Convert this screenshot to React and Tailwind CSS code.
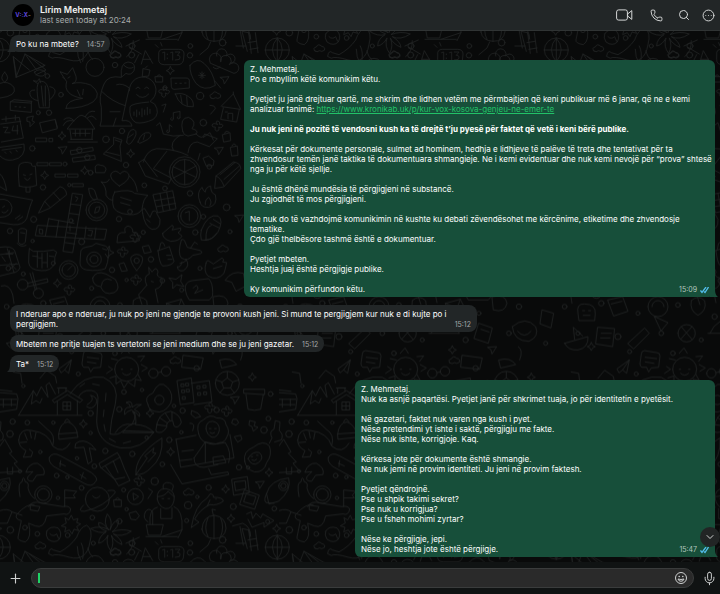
import clsx from "clsx";
import { ChevronDown, CircleEllipsis, Mic, Phone, Plus, Search } from "lucide-react";

const TILE_W = 837;
const TILE_H = 1492;

// [x, y, r] of the little bubbles between the doodles
const dots = [
  [345, 45, 8], [395, 15, 9], [570, 16, 8], [285, 52, 27], [183, 134, 7], [142, 78, 7], [600, 138, 11],
  [495, 113, 6], [115, 188, 6], [147, 188, 8], [318, 268, 10], [366, 243, 8], [610, 218, 10], [97, 295, 8],
  [195, 342, 6], [378, 345, 8], [129, 412, 8], [208, 405, 5], [272, 368, 7], [433, 406, 7], [495, 415, 7],
  [570, 430, 8], [628, 350, 7], [680, 472, 10], [610, 500, 7], [101, 508, 9], [213, 512, 6], [357, 507, 8],
  [430, 547, 6], [30, 543, 8], [245, 575, 9], [98, 573, 5], [390, 485, 7], [453, 628, 8], [586, 547, 8],
  [690, 545, 6], [70, 672, 6], [336, 660, 8], [487, 692, 7], [600, 655, 6], [25, 655, 7], [380, 690, 5],
  [160, 640, 6], [275, 715, 6], [545, 720, 6], [745, 60, 9], [790, 130, 8], [760, 210, 7], [800, 330, 9],
  [765, 430, 7], [745, 590, 8], [810, 640, 6], [20, 770, 7], [130, 760, 8], [240, 790, 6], [360, 765, 7],
  [470, 800, 8], [600, 790, 6], [720, 770, 8], [60, 850, 6], [180, 860, 9], [310, 850, 7], [430, 870, 6],
  [560, 870, 8], [690, 850, 7], [800, 880, 6], [215, 905, 6], [345, 910, 7], [590, 955, 8], [235, 972, 6],
  [272, 1090, 8], [358, 1078, 8], [372, 1026, 7], [426, 1020, 5], [548, 1082, 8], [650, 1080, 8],
  [38, 1115, 8], [30, 1152, 10], [82, 1118, 7], [160, 1118, 5], [272, 1149, 5], [544, 1147, 5], [508, 1170, 8],
  [440, 1163, 5], [397, 1212, 8], [316, 1203, 8], [283, 1249, 7], [231, 1225, 5], [487, 1243, 7], [121, 1206, 5],
  [792, 1140, 10], [805, 1106, 7], [170, 1277, 7], [60, 1264, 5], [202, 1282, 5], [245, 1314, 7],
  [464, 1294, 11], [371, 1320, 6], [626, 1313, 8], [717, 1252, 8], [744, 1253, 5], [592, 1341, 5], [564, 1366, 11],
  [174, 1344, 5], [358, 1414, 8], [277, 1403, 7], [700, 1370, 9], [31, 1440, 10], [75, 1433, 7], [112, 1452, 7],
  [203, 1456, 7], [280, 1480, 6], [668, 1470, 10], [396, 1480, 9], [571, 1480, 7], [823, 1376, 7], [803, 1415, 6],
  [380, 1378, 5], [560, 1412, 6], [812, 1032, 7], [522, 1068, 5], [70, 1008, 5],
];

const sparkles = [
  [186, 258], [134, 376], [254, 362], [392, 311], [511, 62], [172, 700], [450, 1090], [250, 1122],
  [512, 1206], [807, 1268], [677, 1318], [757, 982], [693, 1406], [830, 1436], [520, 900], [100, 890],
];

const flowers = [
  [652, 228], [368, 606], [408, 690], [418, 1293], [680, 1084], [630, 1074], [208, 720], [492, 126], [406, 562],
];

const triangles = [
  [188, 300], [657, 302], [674, 90], [718, 505], [705, 1050], [780, 1304], [640, 900],
];

const clouds = [
  [345, 12], [668, 595], [120, 1486], [346, 1506], [565, 1325], [525, 930], [645, 135],
];

const doodlePaths = [
  // party hat and pyramid
  "M40 22L48 82L135 46L75 12L48 82M75 12L108 58L135 46M104 66q14-14 32 0q0 14-16 12t-16-12z",
  // candle and cactus
  "M0 100q24-10 42 12q10 26-42 32M14 66q18 20 0 30q-18-10 0-30",
  "M118 172q-16-80 6-78q28-2 24 78zM112 100l-12-8l12 2l6-8l4 12M104 120q-18 0-14 14q4 14 24 18M150 110q20 4 14 20q-6 14-16 20M124 108l6 60M136 108l0 60",
  // fox
  "M198 175q0-25 50-30q-60-10-48-50l-20-30l22 8l16-20l10 26q4 18-12 22q24-8 56 4q36 26 8 50q-30 20-82 20M188 82l6 4M204 84l6-4M232 120l8 18M250 118l-2 16",
  // cassette
  "M32 155l62 4l0 28l-62-6zM32 155l10-6l54 5l-2 5M45 170h4M58 171h4M72 172h4",
  // hugging pair
  "M364 80q-4-42 20-44q26 2 18 26q-10 16-24 8l-14 12q-40-8-52 20q-18 40-8 70l0 40l-4 16h96q-4-20-30-16l14-64l8-34q-20-16-38-10M306 125q30 30 70 42M330 185h30M340 228l8-24M372 46q14 14 28 6",
  "M388 122a40 40 0 1 1 62 32l14 8q18 28-4 46q-30 14-52 10q-22-12-18-48q6-10 56-14M408 116q6-10 12 0M434 116q6-10 12 0M410 134q18 18 36-2M402 186v10M410 180v20M418 186v8M426 176v24M434 180v14M442 172v22M450 178v12",
  // chat bubble, calendar, flash
  "M514 84h44q12 0 10 12v18l-46 4q-8 0-8-8zM526 100h4M540 100h4M554 99h4",
  "M6 208l52-6l12 62l-66 12M2 222l60-8M18 200v14M46 196v14M10 232h14l-10 16h16M40 228l-4 14h18M52 226v26",
  "M82 202l18-4l-4 14l8 4l-14 14l0-14l-8-2z",
  "M120 218l46-10l6 28l-44 12zM166 212l6 20",
  // beach hut
  "M202 236q34-44 44-40q18 4 38 40zM210 240l4 28M278 238l-2 28M212 268h66M192 208q16-12 30 4M190 226q8-18 28-14M256 200q10-20 28-16M262 204q14-14 26 4M218 250h52M226 240v18M240 240v18M256 240v18M204 276h88",
  // surfboard
  "M570 46q22-26 42-6q28 24 34 66q-34 20-58-6q-20-28-18-54zM606 66v20M596 76h20M600 69l12 14M612 69l-12 14M644 92l18 22",
  // fruits
  "M630 36a18 18 0 1 1 32 0a16 16 0 1 1 26 8a16 16 0 1 1 14 26l-70-30zM640 52q10 10 20-2",
  // snail shell and notes
  "M526 132q22-6 40 8q16 10 14 30q-40 4-54-38zM542 136l4 24M560 140l2 26M486 166l12-4l-8 24M630 166q16 0 16 10l-14 16",
  "M520 206v-18l20-4v18M520 206a4 4 0 1 1-6-3M540 202a4 4 0 1 1-6-3M508 244v-20l8 6M508 244a4 4 0 1 1-5-4",
  // bird house
  "M664 168l36-36l22 46l-56-8M670 174l-8 34l48 8l8-38M684 206v-16h14v20M700 132v-6M676 186h6",
  // padlock and bottle
  "M668 254l22-6l2 24l-20 4zM674 250q2-10 12-4M692 292l20-4l2 28l-18 2zM696 288q4-12 12-2M466 80h22v16h-20zM470 80q8-12 14 0M430 56l20 4l-4 18l-18 2zM436 54l6-6",
  // watermelon, popsicle
  "M0 292l72-10q8 40-34 48q-22 4-38-12M6 300l58-8M14 306l4 4M30 304l4 5M48 300l4 5",
  "M58 408q-6-50 0-64q14-12 36-4q0 12 12 8l4 58q-28 10-52 2zM78 412v14h12v-14M70 374l6 2M90 374l6-2M74 384q8 14 16 0M0 372q14 12 20 50l-20-12",
  // dashes
  "M108 264h32v11h-32zM148 265h10v10h-10zM112 338h32v9h-32zM150 338h34v9h-34zM166 372h30v9h-30zM204 372h30v9h-30zM218 401h32v9h-32z",
  // rulers
  "M212 302l66-10l2 10l-66 12zM218 324l66-8l2 12l-66 8zM230 300a8 8 0 1 0 16 0a8 8 0 1 0-16 0M254 322a8 8 0 1 0 16 0a8 8 0 1 0-16 0",
  // flask and slippers
  "M342 262l24 8l-6 18l4 46l-54-22l30-28zM346 270l16 6M318 306l40 10M380 276q4-40 22-38q16 10-8 40q-10 10-14-2zM386 262l14-10M414 276q10-32 34-28q16 12-20 28q-10 8-14 0zM430 268l4-14",
  // stretching woman
  "M548 244q-10-42 18-42q26 12 10 34q22 6 12 16l-24 6q-14-2-16-14M470 226l10-8l10 34q30 10 60 4M588 252q20 20 26 0l38 14l-24 24l-36-14q-24 0-28 32M540 256q-34 20-20 46M610 262l20-14l10 22",
  // wheelchair
  "M430 336q10-36 40-40q54 0 94 20M416 338l20 40l70 24l8-18l-54-28l40-52M416 338l16-10l40 52M508 366a46 46 0 1 1 92 0a46 46 0 1 1-92 0M516 366a38 38 0 1 1 76 0a38 38 0 1 1-76 0M554 328v76M520 350l68 32M520 384l68-36M600 310l-6 20",
  // pencil and leaf
  "M644 414l4-36l52-42q22 2 22 20l-50 54zM648 378q14 4 24 30M660 374l44-36M672 388l46-40M610 324l16-6l16 14l-2 14l-20 2z",
  // heart and speech bubbles
  "M358 408q-34-24-24-38q14-14 26 2q14-16 26 0q8 16-28 36zM304 396q18 6 24-8M304 396q16 14 14 40q10 16 20 14M388 378q20 14 24 46M344 426q50-10 60 4l40 6q-14 8-18 42q-10 18-38 16q-50-4-50-34q-2-22 6-34zM362 442l32 10M362 458l28 8M286 350q4-10 16-4q14 0 16 12l-4 10h-26z",
  // gift cube
  "M460 434l58-12l10 54l-54 12zM464 452l58-10M470 470l56-10M480 430l10 54M500 426l10 54",
  // flame, corn
  "M600 456q-12-28 6-44q4 12 10 14q0-14 16-18q0 22 14 26q8 32-20 38q-22 2-26-16zM616 464q-2-14 10-22q12 14 4 24",
  "M604 540q20-50 50-42q18 12 0 48q-20 30-50 24q-4-16 0-30zM618 570q-2-40 16-44M650 550q-12 20-34 20M630 520l28 14M640 508l22 14",
  // clock
  "M534 498a34 34 0 1 1 68 0a34 34 0 1 1-68 0M542 498a26 26 0 1 1 52 0a26 26 0 1 1-52 0M556 488l12-4l0 28",
  // tube, compass, envelope face
  "M116 488l18-34l46-44q18 4 20 24l-50 40zM134 454l16 18M160 428l20 22M266 416q12-4 18 6l8 24l-10 4q-14-8-16-34M258 480a32 32 0 1 1 64 0a32 32 0 1 1-64 0M266 480a24 24 0 1 1 48 0a24 24 0 1 1-48 0M284 488l4-16l12-2l-4 14z",
  "M0 432l98 18q-6 10-18 56q-10 20-40 18l-40-6M0 448q30-4 36 24q0 30-36 30M8 472l6-4M6 486q10 8 18-6M46 506l14-10M54 510l14-10",
  // crossword
  "M218 430l30 4l-30 174l-28-4zM106 556l6-30l208 12l-6 30zM146 506l76 14M146 506l-10 52M176 512l-8 50M212 462l30 4M208 490l30 4M202 548l28 4M196 578l28 4M258 530l-4 34M288 534l-4 32M118 538v12l10 2l0-12zM266 540l12 2l-4 16l-10-2M226 440l8 4l-6 10M210 528v14",
  // hands
  "M428 490q-4-16 6-14l16 26l8-18q12-4 12 6l10 18q2 32-24 30q-22-8-28-48M440 508l10 8M488 550l28-24q8 2 0 14l26-6q4 8-8 14l12 10q-8 16-34 16q-26-8-24-24zM544 570q8-6 12 8l6 14l40 10q8 8-4 10l-20 4q-14 20-34 8q-12-14 0-54M572 594l12-18l8 6",
  "M618 640q2-12 10-6l12 8l26-18q10 4 2 12l12 2q-4 20-8 32q-20 24-48 8q-14-14-6-38M640 656l26-8",
  // toothbrush, bears, spoon
  "M56 540q10-10 24 0l-4 36q-10 14-20 2zM62 548l12 2M52 580q10 14 26 6",
  "M88 596l12 8q30 2 60-4l10 6q-8 14-6 34q-10 24-40 22q-36-2-38-24q0-26 2-42M98 618l16 2M112 606v46M126 610v44M142 608v44M116 624h10M128 638h12M148 618l14 2",
  "M178 660a28 28 0 1 1 56 0a28 28 0 1 1-56 0M186 660a20 20 0 1 1 40 0a20 20 0 1 1-40 0M204 660l12-12",
  // calculator
  "M0 592q36-6 44 10l16 50q-4 14-20 16l-40 10M0 614l42-6M0 646l54-4M22 596l20 72M18 612h20M28 602v20M30 640l18 18M48 640l-18 18M6 620l10 14",
  // camera
  "M242 606q0-10 14-14l20-4l12-8l28 8q12 6 10 24q-2 28-10 44q-20 8-56 4q-20-4-20-20zM260 628a22 22 0 1 1 44 0a22 22 0 1 1-44 0M270 628a12 12 0 1 1 24 0a12 12 0 1 1-24 0M308 596l12 4l8-12l2 14l12 6l-12 6l-6 10l-8-12",
  // gamepad, marker, baby bottle
  "M352 568q-2-24 24-20q-6-16 8-20q16 4 14 18q20 4 20 26l-66 6zM428 590l18-4l8 20l-20 4zM410 662q-24-30-16-42q16-14 32 0q8 16-16 42M402 632a8 8 0 1 1 16 0a8 8 0 1 1-16 0M358 642l14-4l10 24l-16 2z",
  "M474 602l34-12l14 44q-6 14-34 14q-10-8-14-46zM478 598l4-18q8-8 12 8M500 616h12M504 628h12M540 640q20-4 18-12q14 20-8 34q-16 4-18-12q10 4 14-14",
  // scissors, eggs
  "M52 704a16 16 0 1 1 32 0a16 16 0 1 1-32 0M100 730a15 15 0 1 1 30 0a15 15 0 1 1-30 0M82 700l60-14l2 10l-60 14M90 670l16 50M98 668l12 50M4 708q24-8 34 26l4 26",
  "M278 684q10-24 40-12l28 16q18 30-4 40q-30 10-40-18q-24-2-24-26zM304 708q4-30 30-18M508 684l20 4l18-14l-4 20l10 16l-22-6l-12 12l0-18z",
  "M440 706q-12-28 8-34l-2-20l10 14q14-20 18 0q-8 14 12 18q4 28-20 34l8 40M440 706l-24 28l10 30M454 694l6 2M556 720q-4-24 20-28l50-6q12 12 12 40q4 12-10 24h-60q-10-14-12-30M580 714q12-16 14 2l-10 14l24-10M676 690q20-30 54-20q6 20 4 40l-26 14l-12-26z",
  // robot and ring row
  "M60 790q-6-30 20-28q34 0 32 30l-2 20h-46zM74 782h6M92 782h6M76 796h20M150 750l44-10l16 44l-42 14zM160 762l32-8M270 770a30 30 0 1 1 60 0a30 30 0 1 1-60 0M282 770a18 18 0 1 1 36 0M400 752q20-20 40 0q8 30-20 44q-26-14-20-44M500 760l44-12l20 40l-50 16zM500 760l34 16l10-28M640 740q40-10 44 20q-6 30-40 20z",
  // boat and guitar row
  "M20 880l70-20q2 34-30 40q-30 2-40-20zM50 868l-4-36l28 26M120 832l50 4l-6 54l-50-8zM130 850h30M128 864h28M210 880l50-46l14 16l-46 46zM290 800l40 18l-20 24zM360 850a26 26 0 1 1 52 0a26 26 0 1 1-52 0M370 830l32 38M402 830l-34 38M450 850h90M456 850q20-50 80-40l4 40M600 820l40 14l-12 46l-42-14zM606 838l24 8M700 830q40-34 70 0q12 30-20 44q-46 0-50-44M716 844q20 24 40 0M790 780l34 10l-8 44l-32-12z",
  // note, plane, sun
  "M250 912q0-10 10-10l36 6q10 0 10 10l-4 34l-22 2l-8 12l-6-14h-14q-6-2-6-10zM262 922l34 4M262 936l26 4",
  "M178 956l36-26l-8 40l-12-10l-10 8zM214 930l-20 30",
  "M344 958a36 36 0 1 1 72 0a36 36 0 1 1-72 0M364 958h4M392 958h4M368 970q12 12 24 0M334 926l18 4M364 910l14-16l10 16M414 920l20-2l-12 16M424 944l18 10l-16 10M326 950l12 8l-18 12M330 984l18-6l0 24l14-10l10 22l12-18l20 14l2-22l18 4l-10-18",
  // controllers, taco
  "M446 970a14 14 0 1 1 28 0a14 14 0 1 1-28 0M484 964a14 14 0 1 1 28 0a14 14 0 1 1-28 0M474 968l10-2M120 985l20-24l26 18l4 20M40 966l22 4l4 30M550 916l60 8l-8 34l-56-6zM660 930q34-10 50 14l-44 10zM718 890q16 10 4 40",
  // cabin on the mountain
  "M56 1096l44-74l10 16l14-28l20 32l-6-36l10-8l18 34M100 1022l-6 40l14-10l12 8l6-14M56 1096h190M158 1050l44-28l46 28l-8 8l-38-24l-38 24zM172 1054v40M232 1052v42M190 1056h22v24h-22zM201 1056v24M190 1068h22M176 1030v-16h22v10M172 1014h28",
  "M0 1028l50 4l4 14l-4 32l-50 8M0 1048h50M0 1064h48M10 1048v24M34 1048v20M0 1020l36 4",
  // road
  "M210 1032q40-60 100-50q50 22 36 80q-14 50-16 90q24 6 40-10l92 4q-36 54-100 48q-70-14-72-80l4-72q-2-24-34-20q-20 6-24 20M240 1010l14-10M278 1002l20 4M318 1030l-2 24M312 1080l-2 20M312 1124l4 20M328 1166l18 10M370 1180l22-6M262 1064q24-14 10-28q24 6 16 26q-12 20-28 8",
  // palm island
  "M346 1148q20-32 50-24q20-36-2-44q-14 4-20 14q-4-24 18-22q-4-14-14-14q20-10 18 14q12-12 28-8q-20 10-20 16q20 8 14 20q-10-16-20-14q14 18 8 38q34 0 56 24h-94q16-26 40-28",
  // fried egg
  "M444 1064q-14-24 14-34q20-44 44-18q20 20 10 48q-20 34-48 24q-18-4-20-20M464 1050a14 14 0 1 1 28 0a14 14 0 1 1-28 0",
  // buildings
  "M532 992l42-8l8 74l-40 6zM574 1000l54-8l8 64l-54 8M544 1002h8v8h-8zM558 1000h8v8h-8zM546 1020h8v8h-8zM560 1018h8v8h-8zM548 1040h8v8h-8zM592 1008h8v8h-8zM610 1006h8v8h-8zM594 1028h8v8h-8zM612 1026h8v8h-8z",
  // football and pot
  "M646 1000a36 36 0 1 1 72 0a36 36 0 1 1-72 0M666 996l16-12l16 12l-6 18h-20zM682 984v-18M698 996l18-6M692 1014l12 16M672 1014l-12 14M666 996l-18-6M732 1018l62 0l0 16l-62-4zM738 1034l6 44q20 6 38 0l8-44",
  // croissant
  "M468 1138q4-50 44-54q30 10 32 34q-10 20-22 10l-4-16q-20 0-18 20q-14 22-30 14zM480 1104l20 14M496 1090l14 22M516 1086l0 24M470 1124l28 4",
  // beanie and shrimp
  "M176 1152q4-34 28-36q26 10 28 38l2 8l-56 6zM176 1152l56-4M194 1116q6-18 16 0M56 1170q4-38 40-28q50 6 62 46q10-34-16-50l-26-24M56 1170q0 22 22 32l-8 20l24-2l4-14l-10-8M74 1150l8 20M90 1144l4 20M108 1148l-4 20M60 1178l20-2M160 1190q30 24 50-10",
  // tree, hammer, skateboard
  "M0 1188l14-20l22 38l-8 4l24 26l-10 4l20 24l-62 4M22 1254v18h16v-20M228 1180q20-16 46 4l14 16l-20-6l8 40l-12 8l-12-50l-26 2zM148 1222q10-18 34-4l92 50q24 18 12 28q-10 18-34 4l-90-50q-18-14-14-28M178 1240l18 8M240 1274l18 12M182 1232l-2 18M250 1268l-6 18",
  // drum, leaf, mushroom
  "M298 1240l54-32l8 14l-56 32zM304 1254l40 34l30-6M360 1222l14 36l16 34l-34 16l-16-26M316 1248l24 36M340 1234l14 34M408 1274q-6-56 78-110q4 60-34 90q-20 22-44 20M408 1274l34-50l-8-6l28-24l-4 14l10 2l-24 26M78 1266q10-28 34-26q26 14 20 34l-22 2l-12 18q-20 0-14-14l14-14z",
  // woman at the laptop
  "M596 1152q-10-34 14-42q20-20 40-6q26-2 28 20q14 20 2 38q-6 16-20 16q-20 10-40 0q-18-4-24-26M618 1136q0-22 20-22q22 4 20 28q-6 22-22 20q-16-8-18-26M628 1136h5M644 1136h5M630 1148q6 6 14 0M528 1168l60-12M528 1168l14 84l160-28l-12-70M546 1204l34-4M540 1232l36-4M582 1224l34-48l30 6l30-4q20 30 10 60M616 1176l0 60M582 1224q0 30 30 28l42-8M640 1222l30-4l8 20l-36 6zM512 1244l34 58l140-28l-2-8l-50 8l-8-18",
  // avocado and squash
  "M734 1234q-6-30 26-42q30-24 48-4q10 26-8 50q-8 30-36 28q-26-8-30-32zM744 1226q14-24 34-18q16 14-2 30q-20 14-32-12M754 1220h4M770 1216h4M756 1230q8 6 14-2M808 1180l8-16q-10-20 6-26l4-26l14 4l-2 26q14 12 6 28l-20 6",
  // gems
  "M750 1112l16 4l-4 12l12 4l-14 12l-4-14l-8-4zM700 1108l10 0l6 10l-8 8l-12-6zM704 1160l18-4l4 12l-12 8zM570 1120q18-2 8 22M576 1082l18 8l8 10l-16 4l-12-10z",
  // astronaut
  "M60 1340q-8-44 6-44q4-24 10 0q12 0 8 18q6 24 20 32M104 1334a26 26 0 1 1 52 0a26 26 0 1 1-52 0M112 1334a18 18 0 1 1 36 0a18 18 0 1 1-36 0M86 1370q10-20 40-10l62 10q20-4 24 8q-4 20-20 14l-52 6q-8 40-34 30l-20-8q10 44-10 56q-24-4-22-14l10-50q-20-4-14-18q30-34 52-30M92 1366l28 4l-6 14l-22-4zM194 1370l0-50l36 4l-10 12l6 8l-30 0M0 1382q24-8 36 4l-14 34h-22M36 1386l30 10",
  // rocket
  "M800 1330q10-40 66-46q10 36-30 70l-28 8zM836 1308a14 14 0 1 1 28 0a14 14 0 1 1-28 0M842 1308a8 8 0 1 1 16 0a8 8 0 1 1-16 0M800 1330q-10 20-2 28l24 2",
  // planet, play, photo frames
  "M256 1348a36 36 0 1 1 72 0a36 36 0 1 1-72 0M250 1366q-20 20 4 18q60-14 90-54q8-12-20-8M278 1338q10 14 22 0M382 1340a24 24 0 1 1 48 0a24 24 0 1 1-48 0M400 1330l16 10l-14 10zM342 1350h22v20h-20zM346 1350q6-14 14 0M388 1390l20-6l10 14l-10 12l-14-2zM446 1316l12 8l-14 22",
  "M696 1288l46-8l6 48l-46 8zM704 1296l32-4l2 24l-30 6zM734 1320l44 16l-14 42l-44-14zM740 1332l28 8l-8 24l-28-8z",
  // gardener
  "M472 1348q-4-32 26-32q30 6 24 36q-6 26-26 24q-20-6-24-28M490 1316q-4-16 10-18q20 0 20 12l-4 12M474 1340q20 0 30-16l18 16M486 1346h5M504 1346h5M472 1372q-26 4-22 50M522 1370q28 10 24 70l-60 20M482 1376v30h34v-32M440 1424h50l-8 32h-36zM436 1386q10-16 22 0v38M436 1386q-10 20 8 30M438 1460h94M546 1440l-12 24",
  // fish and pumpkin
  "M574 1432q10-66 48-88l8-12q12 0 10 10q30 0 30 12q-20 14-40 10q-30 14-46 44l12 8zM630 1350l-8 18M648 1346v2",
  "M606 1438q2-40 38-42q34 6 34 40q-4 30-36 30q-32-2-36-28zM624 1404q-14 30 0 56M642 1396v70M662 1404q12 28 0 56M640 1396l-4-18l10 2M600 1506l24-20l8-18",
  // bamboo
  "M740 1392l14-6l4 20l10-16l14 14l6-12l34 20l-30 20v-14l-36 14l-12-24M698 1428l30-8q24 10 24 40l-6-20l-20-4l16 60M708 1480l30 0M746 1440l8 62M766 1440l8 60M744 1470l24-4M750 1490l24-4M720 1430l10 56",
  // globe
  "M796 1492a36 36 0 1 1 72 0a36 36 0 1 1-72 0M832 1456v72M796 1492h72M832 1456q-30 34 0 72M832 1456q30 34 0 72",
  // whale
  "M146 1510q4-20 14-10l20 6q30-16 50-44q10-30 30-36q20 12 10 50q-10 60-62 46q-40-12-50-6zM232 1490q0 24 10 40M244 1480q10 20 4 46M264 1494q4 20 14 26",
  // poinsettia
  "M326 1440q-18-20-4-48q18 20 8 48q10-30 26-28q0 20-20 34q30-12 58-2q-30 20-54 8q24 14 26 32q-24-10-32-28q10 24-2 46q-16-20-8-46q-10 20-28 24q0-20 22-34q-22 6-46-10q26-10 52 2M326 1440q-16-22-30-22q-4 16 24 26",
  // burst and cookie
  "M196 1404l10 6l8-14l6 14l14-4l-4 12l12 4l-12 8l6 12l-14-4l-6 14l-8-12l-14 6l4-14l-14-4l14-8zM140 1444q10-18 34-10q14 14 4 34q-14 14-34 0q-8-12-4-24M150 1452q10 10 20 0l6 14",
  // translation sign
  "M378 1480l40-18M400 1464q0 34-20 48M390 1484l34 20M424 1534l12-40l22 38M430 1520h22M404 1530l12-24",
  // alarm clock
  "M476 1506q-2-16 14-16h46q16 0 16 14l-2 20q-4 12-16 12h-40q-18 0-18-14zM488 1500l6-2v24M502 1504v2M502 1516v2M512 1500l6-2v24M526 1498h14l-8 10q12 0 6 12l-12 2M474 1484l-8-8M486 1480l-4-10",
  // tent
  "M40 1512l48 40M40 1512l10 60M88 1512l50 40l-30 14M650 1510a16 16 0 1 1 30 0a14 14 0 1 1 14 22",
];

const Wallpaper = () => (
  <svg className="absolute inset-0 w-full h-full" aria-hidden="true">
    <defs>
      <g id="doodles" fill="none" stroke="#1f2121" strokeWidth="2.6" strokeLinecap="round" strokeLinejoin="round">
        {doodlePaths.map((d, index) => (
          <path key={index} d={d} />
        ))}
        {dots.map(([x, y, r], index) => (
          <circle key={index} cx={x} cy={y} r={r} />
        ))}
        {sparkles.map(([x, y], index) => (
          <path key={index} d={`M${x} ${y - 12}q2 10 12 12q-10 2-12 12q-2-10-12-12q10-2 12-12z`} />
        ))}
        {flowers.map(([x, y], index) => (
          <path
            key={index}
            d={`M${x} ${y - 5}q-8-10 2-10q8 2 4 10q12-2 10 6q-4 8-12 2q4 12-6 12q-8-2-4-12q-10 2-10-6q4-8 16-2`}
          />
        ))}
        {triangles.map(([x, y], index) => (
          <path key={index} d={`M${x - 13} ${y - 8}l26-2l-14 22l-3-12z`} />
        ))}
        {clouds.map(([x, y], index) => (
          <path key={index} d={`M${x - 12} ${y + 9}q-8-10 4-12q6-12 16-2q12 2 8 12q-8 6-14 1q-8 6-14 1z`} />
        ))}
      </g>
      <pattern
        id="wallpaper"
        width={TILE_W}
        height={TILE_H}
        patternUnits="userSpaceOnUse"
        patternTransform="translate(0 19) scale(0.3333)"
      >
        <use href="#doodles" />
        <use href="#doodles" x={-TILE_W} />
        <use href="#doodles" y={-TILE_H} />
        <use href="#doodles" x={-TILE_W} y={-TILE_H} />
      </pattern>
    </defs>
    <rect width="100%" height="100%" fill="url(#wallpaper)" />
  </svg>
);

const ReadTicks = () => (
  <svg viewBox="0 0 18 14" className="w-[9px] h-[7px]" fill="none" stroke="#53bdeb" strokeWidth="2.6" role="img" aria-label="Read">
    <path d="M1 7l3 4L12 0M8 9l2 2L17 0" />
  </svg>
);

const Tail = ({ own = false }) => (
  <svg
    viewBox="0 0 8 8"
    aria-hidden="true"
    className={clsx("absolute bottom-0 size-2", own ? "-right-[3px] text-[#174f3a]" : "-left-[3px] -scale-x-100 text-[#222627]")}
  >
    <path d="M0 0h5q0 6 3 8H0z" fill="currentColor" />
  </svg>
);

const Incoming = ({ time, tail = false, children }) => (
  <article className="relative flex items-end gap-2 self-start max-w-[467px] pt-1 pb-[3px] px-1.5 rounded-lg bg-[#222627]">
    {tail && <Tail />}
    <p className="relative">{children}</p>
    <time className="relative top-px text-[7px] text-[#a3a7a7]">{time}</time>
  </article>
);

const Outgoing = ({ time, className, children }) => (
  <article className={clsx("relative grid self-end pt-1 pb-[3px] pl-1.5 pr-0.5 rounded-md bg-[#174f3a]", className)}>
    <Tail own />
    <div className="col-start-1 row-start-1 space-y-2.5">{children}</div>
    <div className="relative top-px col-start-1 row-start-1 self-end justify-self-end flex items-center gap-[3px] mr-1">
      <time className="text-[7px] text-[#b4c8bf]">{time}</time>
      <ReadTicks />
    </div>
  </article>
);

const Header = () => (
  <header className="flex items-center h-[31px] pl-3 bg-[#222627] border-b border-[#303434]">
    <div className="flex items-center justify-center size-[22px] rounded-full bg-black text-[6px] font-bold text-[#5a45d6]">
      V:<span className="text-[#3b35a8]">:</span>X<span className="text-[#777]">-</span>
    </div>
    <div className="ml-1.5 flex-1">
      <h1 className="text-[9px] leading-[10px] font-semibold text-[#f2f2f2]">Lirim Mehmetaj</h1>
      <p className="text-[8px] leading-[10px] text-[#a6aaaa]">last seen today at 20:24</p>
    </div>
    <div className="flex items-center text-[#d5d7d7]">
      <button type="button" aria-label="Video call" className="flex justify-center w-8">
        <svg viewBox="0 0 17 12" className="w-[17px] h-3" fill="none" stroke="currentColor">
          <rect x="0.6" y="0.9" width="10.8" height="10.2" rx="2" />
          <path d="M11.6 5L15.8 1.6v8.8L11.6 7z" strokeLinejoin="round" />
        </svg>
      </button>
      <button type="button" aria-label="Voice call" className="flex justify-center w-8">
        <Phone className="size-[13px]" strokeWidth={1.8} />
      </button>
      <button type="button" aria-label="Search" className="flex justify-center w-6">
        <Search className="size-3" strokeWidth={2} />
      </button>
      <button type="button" aria-label="More" className="flex justify-center w-6">
        <CircleEllipsis className="size-[13px]" strokeWidth={1.8} />
      </button>
    </div>
  </header>
);

const Composer = () => (
  <footer className="relative flex items-center h-8 pl-2 bg-[#101313] text-[#cfd1d1]">
    <button type="button" aria-label="Attach" className="flex justify-center w-[15px] mr-2">
      <Plus className="size-[15px] shrink-0" strokeWidth={1.8} />
    </button>
    <div className="flex items-center flex-1 h-5 px-1.5 rounded-full bg-[#2a2a2a] border border-[#3a3c3c]">
      <span className="w-0.5 h-2.5 bg-[#1fd266]" />
      <input type="text" aria-label="Message" className="flex-1 min-w-0 px-1 bg-transparent outline-none" />
      <button type="button" aria-label="Emoji">
        <svg viewBox="0 0 24 24" className="size-3" fill="none" stroke="currentColor" strokeWidth="2">
          <circle cx="12" cy="12" r="11" />
          <circle cx="8.4" cy="9" r="1.6" fill="currentColor" stroke="none" />
          <circle cx="15.6" cy="9" r="1.6" fill="currentColor" stroke="none" />
          <path d="M6 14q6 2 12 0q-1 4.500-6 4.500T6 14z" strokeLinejoin="round" />
        </svg>
      </button>
    </div>
    <button type="button" aria-label="Record" className="flex justify-center w-[26px] pl-1">
      <Mic className="size-[15px]" strokeWidth={1.6} />
    </button>
  </footer>
);

export default function App() {
  return (
    <div className="flex flex-col min-h-screen overflow-hidden bg-[#090a0a] font-['Inter',sans-serif] text-[8px] leading-[10px] text-white">
      <Header />
      <main className="relative flex flex-col flex-1 pt-1 pb-[5px] pl-2.5 pr-[5px]">
        <Wallpaper />
        <Incoming time="14:57" tail>Po ku na mbete?</Incoming>

        <Outgoing time="15:09" className="mt-2 max-w-[471px]">
          <p>
            Z. Mehmetaj.
            <br />
            Po e mbyllim këtë komunikim këtu.
          </p>
          <p>
            Pyetjet ju janë drejtuar qartë, me shkrim dhe lidhen vetëm me përmbajtjen që keni publikuar më 6 janar, që ne e kemi
            <br />
            analizuar tanimë:{" "}
            <a href="https://www.kronikab.uk/p/kur-vox-kosova-genjeu-ne-emer-te" className="text-[#22c168] underline">
              https://www.kronikab.uk/p/kur-vox-kosova-genjeu-ne-emer-te
            </a>
          </p>
          <p className="font-bold">Ju nuk jeni në pozitë të vendosni kush ka të drejtë t’ju pyesë për faktet që vetë i keni bërë publike.</p>
          <p>
            Kërkesat për dokumente personale, sulmet ad hominem, hedhja e lidhjeve të palëve të treta dhe tentativat për ta
            <br />
            zhvendosur temën janë taktika të dokumentuara shmangieje. Ne i kemi evidentuar dhe nuk kemi nevojë për “prova” shtesë
            nga ju për këtë sjellje.
          </p>
          <p>
            Ju është dhënë mundësia të përgjigjeni në substancë.
            <br />
            Ju zgjodhët të mos përgjigjeni.
          </p>
          <p>
            Ne nuk do të vazhdojmë komunikimin në kushte ku debati zëvendësohet me kërcënime, etiketime dhe zhvendosje
            <br />
            tematike.
            <br />
            Çdo gjë thelbësore tashmë është e dokumentuar.
          </p>
          <p>
            Pyetjet mbeten.
            <br />
            Heshtja juaj është përgjigje publike.
          </p>
          <p>Ky komunikim përfundon këtu.</p>
        </Outgoing>

        <div className="flex flex-col gap-[3px] my-2">
          <Incoming time="15:12">
            I nderuar apo e nderuar, ju nuk po jeni ne gjendje te provoni kush jeni. Si mund te pergjigjem kur nuk e di kujte po i
            pergjigjem.
          </Incoming>
          <Incoming time="15:12">Mbetem ne pritje tuajen ts vertetoni se jeni medium dhe se ju jeni gazetar.</Incoming>
          <Incoming time="15:12" tail>Ta*</Incoming>
        </div>

        <Outgoing time="15:47" className="w-[360px] max-w-full">
          <p>
            Z. Mehmetaj.
            <br />
            Nuk ka asnjë paqartësi. Pyetjet janë për shkrimet tuaja, jo për identitetin e pyetësit.
          </p>
          <p>
            Në gazetari, faktet nuk varen nga kush i pyet.
            <br />
            Nëse pretendimi yt ishte i saktë, përgjigju me fakte.
            <br />
            Nëse nuk ishte, korrigjoje. Kaq.
          </p>
          <p>
            Kërkesa jote për dokumente është shmangie.
            <br />
            Ne nuk jemi në provim identiteti. Ju jeni në provim faktesh.
          </p>
          <p>
            Pyetjet qëndrojnë.
            <br />
            Pse u shpik takimi sekret?
            <br />
            Pse nuk u korrigjua?
            <br />
            Pse u fsheh mohimi zyrtar?
          </p>
          <p>
            Nëse ke përgjigje, jepi.
            <br />
            Nëse jo, heshtja jote është përgjigje.
          </p>
        </Outgoing>

        <button
          type="button"
          aria-label="Scroll to latest"
          className="absolute right-0 bottom-[15px] flex items-center justify-center size-5 rounded-full bg-[#222525] text-[#d0d2d2]"
        >
          <ChevronDown className="size-3" strokeWidth={2} />
        </button>
      </main>
      <Composer />
    </div>
  );
}
